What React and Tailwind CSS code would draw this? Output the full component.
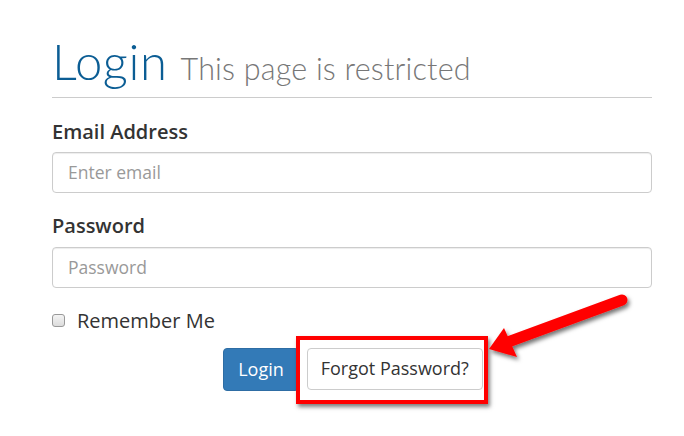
import React from "react";

const Arrow = () => (
  <svg
    className="absolute left-0 top-0 pointer-events-none"
    width="684"
    height="436"
    viewBox="0 0 684 436"
  >
    <defs>
      <filter id="sh" x="-20%" y="-20%" width="140%" height="140%">
        <feDropShadow dx="2" dy="3" stdDeviation="2" floodColor="#000" floodOpacity="0.55" />
      </filter>
    </defs>
    <g filter="url(#sh)">
      <line x1="622" y1="300" x2="508" y2="342" stroke="#f00" strokeWidth="11" strokeLinecap="round" />
      <polygon points="489,349 504,328 517,357" fill="#f00" />
    </g>
  </svg>
);

export default function App() {
  return (
    <div className="relative w-[684px] h-[436px] bg-white overflow-hidden font-['Open_Sans',sans-serif] text-[#333]">
      <div className="w-[600px] ml-[52px] pt-[35px]">
        <div className="flex items-baseline gap-[13px] pb-[5px] border-b border-[#ccc]">
          <h1 className="font-['Lato',sans-serif] font-light text-[49px] leading-[52px] text-[#0b5d94] tracking-[0.6px]">
            Login
          </h1>
          <span className="font-['Lato',sans-serif] font-light text-[30.5px] text-[#777] tracking-[0.2px]">
            This page is restricted
          </span>
        </div>

        <label className="block mt-[21px] text-[20px] font-semibold leading-[25px]">Email Address</label>
        <input
          type="email"
          placeholder="Enter email"
          className="block mt-[8px] w-full h-[41px] px-[15px] border border-[#ccc] rounded-[4px] text-[17.5px] placeholder:text-[#999] outline-none shadow-[inset_0_1px_1px_rgba(0,0,0,0.075)]"
        />

        <label className="block mt-[20px] text-[20px] font-semibold leading-[25px]">Password</label>
        <input
          type="password"
          placeholder="Password"
          className="block mt-[9px] w-full h-[41px] px-[15px] border border-[#ccc] rounded-[4px] text-[17.5px] placeholder:text-[#999] outline-none shadow-[inset_0_1px_1px_rgba(0,0,0,0.075)]"
        />

        <label className="flex items-center mt-[20px] h-[26px]">
          <span className="w-[13px] h-[13px] rounded-[3px] border border-[#999] bg-gradient-to-b from-[#f4f4f4] to-[#dcdcdc]" />
          <span className="ml-[12px] text-[20px]">Remember Me</span>
        </label>

        <div className="flex justify-center gap-[8px] mt-[14px] pl-[2px]">
          <button className="h-[43px] px-[14px] rounded-[4px] bg-[#337ab7] border border-[#2e6da4] text-white text-[18px]">
            Login
          </button>
          <button className="h-[42px] px-[13px] rounded-[4px] bg-white border border-[#ccc] text-[#333] text-[18px]">
            Forgot Password?
          </button>
        </div>
      </div>

      <div className="absolute left-[296px] top-[336px] w-[192px] h-[68px] border-[4px] border-[#f00] shadow-[2px_3px_4px_rgba(0,0,0,0.5)]" />
      <Arrow />
    </div>
  );
}
